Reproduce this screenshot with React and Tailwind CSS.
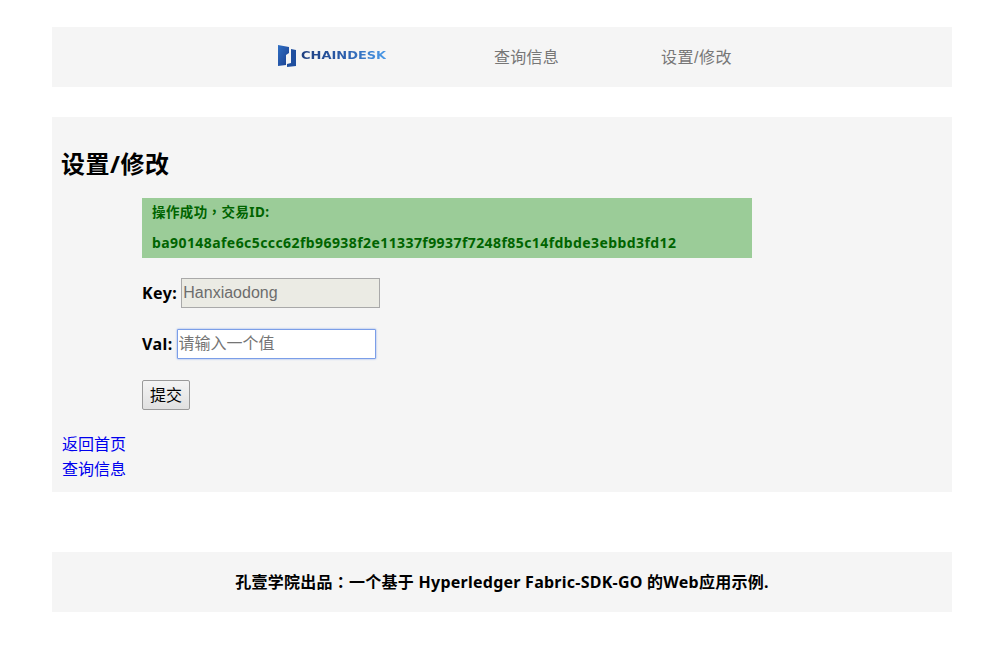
const sans = "font-['Noto_Sans','Noto_Sans_CJK_SC',sans-serif]";
const cjk = "font-['Liberation_Sans','Noto_Sans_CJK_SC',sans-serif]";
const punct = "font-['Noto_Sans_CJK_TC',sans-serif]";

function Logo() {
  return (
    <div className="flex items-center gap-[4px] w-[110px] h-[24px] blur-[0.5px]">
      <svg width="20" height="24" viewBox="0 0 20 24" className="shrink-0">
        <defs>
          <linearGradient id="logoBlue" x1="0" y1="0" x2="1" y2="1">
            <stop offset="0" stopColor="#2f6fc4" />
            <stop offset="1" stopColor="#1b3f8f" />
          </linearGradient>
        </defs>
        <path d="M1 1 L12 3 L12 9 L9 11 L9 21 L1 22 Z" fill="url(#logoBlue)" />
        <path d="M14 5 L19 6 L19 22 L10 23 L10 20 L14 19 Z" fill="#1f4f9f" />
      </svg>
      <span className="font-['DejaVu_Sans',sans-serif] font-bold text-[11px] leading-none bg-gradient-to-r from-[#1f3f7f] via-[#2a5cab] to-[#4a9ae8] bg-clip-text text-transparent scale-x-[1.18] origin-left">
        CHAINDESK
      </span>
    </div>
  );
}

export default function App() {
  return (
    <div className={`w-[900px] ml-[52px] pt-[27px] h-[654px] bg-white text-black ${sans}`}>
      {/* Header */}
      <header className="h-[60px] bg-[#f5f5f5] flex items-center pl-[225px] pt-[2px]">
        <div className="-mt-[5px]">
          <Logo />
        </div>
        <a className={`ml-[107px] text-[16px] tracking-[0.25px] text-[#777] ${cjk}`}>查询信息</a>
        <a className={`ml-[102px] text-[16px] tracking-[0.5px] text-[#777] ${cjk}`}>设置/修改</a>
      </header>

      {/* Main */}
      <main className="mt-[30px] h-[375px] bg-[#f5f5f5] px-[10px] pt-[29px]">
        <h1 className="text-[24px] font-bold leading-[36px] h-[36px] -ml-[1px] tracking-[0.5px]">设置/修改</h1>
        <div className="ml-[80px] mt-[16px]">
          <div className="w-[610px] h-[60px] bg-[#9bcc98] pl-[10px] pt-[5px] text-[13.5px] font-bold text-[#006400]">
            <p className="h-[20px] leading-[18px] tracking-[0.4px]">操作成功<span className={`${punct} leading-none`}>，</span>交易ID:</p>
            <p className="mt-[10px] leading-[20px] text-[14px] tracking-[0.42px]">
              ba90148afe6c5ccc62fb96938f2e11337f9937f7248f85c14fdbde3ebbd3fd12
            </p>
          </div>
          <div className="mt-[20px] flex items-center h-[30px]">
            <label className="text-[16px] font-bold mr-[4px] tracking-[0.45px]">Key:</label>
            <input
              disabled
              value="Hanxiaodong"
              readOnly
              className={`w-[199px] h-[30px] px-[1px] border border-[#a9a9a9] bg-[#ebebe4] text-[16px] text-[#6d6d6d] ${cjk}`}
            />
          </div>
          <div className="mt-[21px] flex items-center h-[30px]">
            <label className="text-[16px] font-bold mr-[4px] tracking-[0.4px]">Val:</label>
            <input
              placeholder="请输入一个值"
              className={`w-[199px] h-[30px] px-[1px] border border-[#7b9ee8] rounded-[1px] shadow-[0_0_2px_#7b9ee8] bg-white text-[16px] outline-none placeholder:text-[#757575] ${cjk}`}
            />
          </div>
          <button className={`mt-[21px] block w-[48px] h-[30px] pt-[1px] border border-[#999] rounded-[2px] bg-gradient-to-b from-[#f4f4f4] to-[#e0e0e0] text-[16px] ${cjk}`}>
            提交
          </button>
        </div>
        <div className={`mt-[21px] text-[16px] leading-[25px] pt-[1px] text-[#0000ee] ${cjk}`}>
          <a className="block">返回首页</a>
          <a className="block">查询信息</a>
        </div>
      </main>

      {/* Footer */}
      <footer className="mt-[60px] h-[60px] bg-[#f5f5f5] flex items-center justify-center text-[16px] font-bold tracking-[0.25px]">
        <span>
          孔壹学院出品<span className={`${punct} leading-none`}>：</span>一个基于 Hyperledger Fabric-SDK-GO 的Web应用示例.
        </span>
      </footer>
    </div>
  );
}
